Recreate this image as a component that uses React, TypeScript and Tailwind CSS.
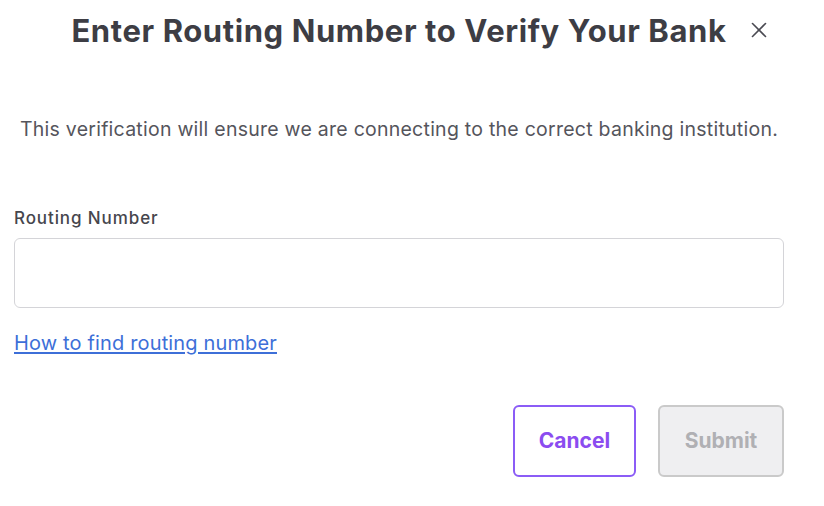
import { X } from 'lucide-react';

export default function App() {
  return (
    <div className="min-h-[506px] w-[824px] bg-white font-['Inter',sans-serif]">
      <div className="w-[770px] ml-[14px] flex flex-col">
        <div className="relative flex h-[62px] items-center justify-center">
          <h1 className="text-[31px] font-bold tracking-[0.6px] text-[#3d3d44]">
            Enter Routing Number to Verify Your Bank
          </h1>
          <button
            type="button"
            aria-label="Close"
            className="absolute right-[12px] top-[17px] text-[#4a4a52]"
          >
            <X size={26} strokeWidth={1.5} />
          </button>
        </div>

        <p className="mt-[53px] text-center text-[19.5px] leading-[28px] tracking-[0.25px] text-[#55555c]">
          This verification will ensure we are connecting to the correct banking institution.
        </p>

        <label className="mt-[63px] text-[17px] font-medium leading-[24px] tracking-[0.9px] text-[#46464d]">Routing Number</label>
        <input
          type="text"
          className="mt-[8px] h-[70px] w-full rounded-[6px] border border-[#d4d4d8] px-3 outline-none"
        />

        <a href="#" className="mt-[20px] w-fit text-[20px] tracking-[0.15px] text-[#3d6fd8] underline underline-offset-2">
          How to find routing number
        </a>

        <div className="mt-[47px] flex justify-end gap-[22px]">
          <button
            type="button"
            className="h-[72px] w-[123px] rounded-[6px] border-2 border-[#8b5cf6] text-[21px] font-bold text-[#8b4cf0]"
          >
            Cancel
          </button>
          <button
            type="button"
            disabled
            className="h-[72px] w-[126px] rounded-[6px] border-2 border-[#cacaca] bg-[#efeff1] text-[21px] font-bold text-[#b0b0b4]"
          >
            Submit
          </button>
        </div>
      </div>
    </div>
  );
}
